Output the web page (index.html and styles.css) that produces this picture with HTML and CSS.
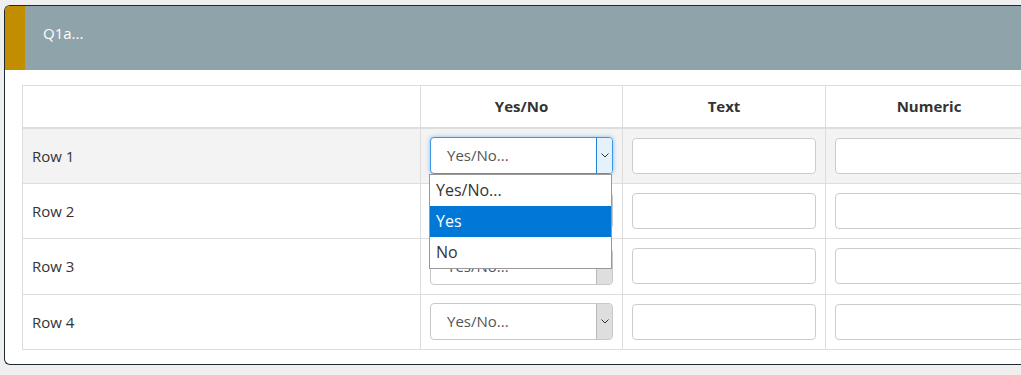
FILE: index.html
```html
<!DOCTYPE html>
<html lang="en">
<head>
  <meta charset="UTF-8" />
  <title>Q1a</title>
  <link rel="stylesheet" href="styles.css">
</head>
<body>
  <div class="question">
    <div class="question-head">
      <div class="stripe"></div>
      <div class="title">Q1a...</div>
    </div>

    <div class="question-body">
      <table class="grid">
        <colgroup>
          <col class="c-label">
          <col class="c-yesno">
          <col class="c-text">
          <col class="c-last">
        </colgroup>
        <thead>
          <tr>
            <th></th>
            <th>Yes/No</th>
            <th>Text</th>
            <th>Numeric</th>
          </tr>
        </thead>
        <tbody>
          <tr class="hover">
            <td>Row 1</td>
            <td class="has-menu">
              <div class="select focus">
                <span class="value">Yes/No...</span>
                <span class="arrow"><svg width="8" height="5" viewBox="0 0 8 5"><path d="M0.5 0.5 L4 4 L7.5 0.5" fill="none" stroke="#333" stroke-width="1"/></svg></span>
              </div>
              <ul class="menu">
                <li>Yes/No...</li>
                <li class="active">Yes</li>
                <li>No</li>
              </ul>
            </td>
            <td><input type="text" class="field"></td>
            <td><input type="text" class="field"></td>
          </tr>
          <tr>
            <td>Row 2</td>
            <td>
              <div class="select">
                <span class="value">Yes/No...</span>
                <span class="arrow"><svg width="8" height="5" viewBox="0 0 8 5"><path d="M0.5 0.5 L4 4 L7.5 0.5" fill="none" stroke="#333" stroke-width="1"/></svg></span>
              </div>
            </td>
            <td><input type="text" class="field"></td>
            <td><input type="text" class="field"></td>
          </tr>
          <tr>
            <td>Row 3</td>
            <td>
              <div class="select">
                <span class="value">Yes/No...</span>
                <span class="arrow"><svg width="8" height="5" viewBox="0 0 8 5"><path d="M0.5 0.5 L4 4 L7.5 0.5" fill="none" stroke="#333" stroke-width="1"/></svg></span>
              </div>
            </td>
            <td><input type="text" class="field"></td>
            <td><input type="text" class="field"></td>
          </tr>
          <tr>
            <td>Row 4</td>
            <td>
              <div class="select">
                <span class="value">Yes/No...</span>
                <span class="arrow"><svg width="8" height="5" viewBox="0 0 8 5"><path d="M0.5 0.5 L4 4 L7.5 0.5" fill="none" stroke="#333" stroke-width="1"/></svg></span>
              </div>
            </td>
            <td><input type="text" class="field"></td>
            <td><input type="text" class="field"></td>
          </tr>
        </tbody>
      </table>
    </div>
  </div>
</body>
</html>
```

FILE: styles.css
```css
* {
  margin: 0;
  padding: 0;
  box-sizing: border-box;
}

body {
  font-family: 'Open Sans', sans-serif;
  background: #efefef;
  color: #333;
  overflow: hidden;
  width: 1021px;
  height: 375px;
}

.question {
  margin: 5px 0 0 4px;
  width: 1100px;
  background: #fff;
  border: 1px solid #1f2a30;
  border-right: none;
  border-radius: 6px 0 0 6px;
  overflow: hidden;
}

.question-head {
  display: flex;
  height: 64px;
  background: #8fa3aa;
}

.stripe {
  width: 20px;
  background: #c28e00;
}

.title {
  padding-left: 18px;
  line-height: 54px;
  color: #fff;
  font-size: 15px;
}

.question-body {
  padding: 15px 17px 14px;
}

.grid {
  border-collapse: collapse;
  table-layout: fixed;
  width: 1010px;
  font-size: 15px;
}

.c-label { width: 398px; }
.c-yesno { width: 202px; }
.c-text { width: 203px; }
.c-last { width: 207px; }

.grid th,
.grid td {
  border: 1px solid #ddd;
}

.grid th {
  height: 42px;
  font-weight: bold;
  font-size: 15px;
  color: #333;
  text-align: center;
  border-bottom: 2px solid #ddd;
}

.grid td {
  height: 55.5px;
  padding: 0 9px;
  vertical-align: middle;
}

.grid td:first-child {
  padding-left: 9px;
  color: #333;
}

.grid tr.hover td {
  background: #f3f3f3;
}

.has-menu {
  position: relative;
}

.select {
  display: flex;
  height: 37px;
  border: 1px solid #c8c8c8;
  border-radius: 4px;
  background: #fff;
  overflow: hidden;
}

.select .value {
  flex: 1;
  padding-left: 16px;
  line-height: 35px;
  font-size: 15px;
  color: #555;
}

.select .arrow {
  width: 16px;
  display: flex;
  align-items: center;
  justify-content: center;
  background: #dedede;
  border-left: 1px solid #b8b8b8;
}

.select.focus {
  border-color: #3d95e6;
  box-shadow: 0 0 4px rgba(60, 150, 230, 0.6);
}

.select.focus .arrow {
  background: #e5f1fb;
  border-left-color: #1e7fd8;
}

.field {
  display: block;
  width: 100%;
  height: 36px;
  border: 1px solid #ccc;
  border-radius: 4px;
  background: #fff;
}

.menu {
  position: absolute;
  left: 8px;
  top: 45px;
  width: 183px;
  list-style: none;
  background: #fff;
  border: 1px solid #999;
  z-index: 5;
}

.menu li {
  height: 31px;
  line-height: 30px;
  padding-left: 6px;
  font-size: 16px;
  color: #333;
}

.menu li.active {
  background: #0078d7;
  color: #fff;
}
```
